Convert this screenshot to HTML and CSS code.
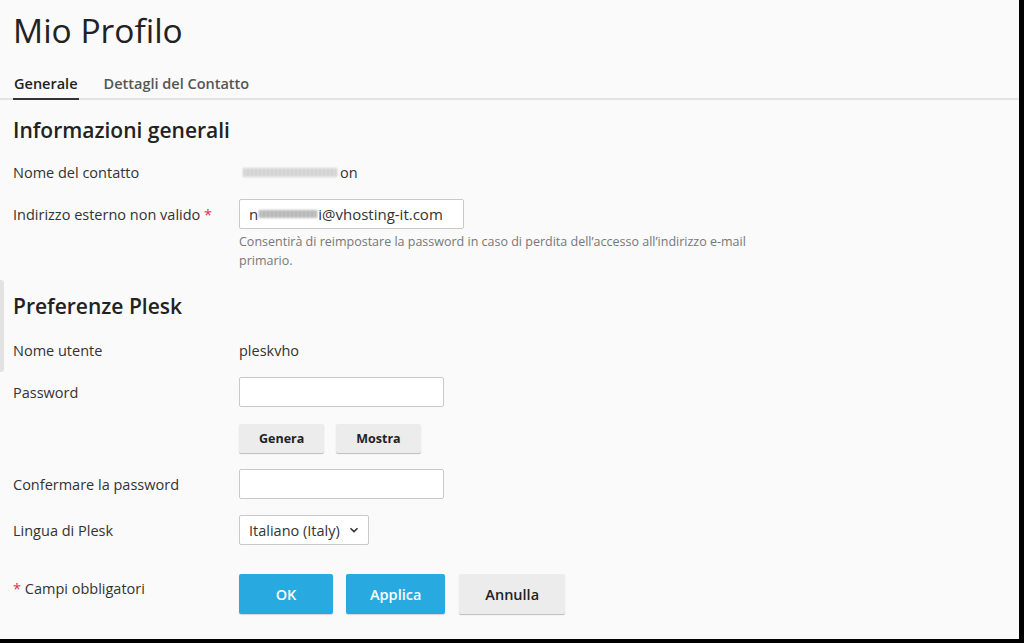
FILE: index.html
```html
<!DOCTYPE html>
<html lang="it">
<head>
  <meta charset="UTF-8" />
  <meta name="viewport" content="width=device-width, initial-scale=1.0"/>
  <title>Mio Profilo</title>
  <link rel="stylesheet" href="styles.css">
</head>
<body>
  <div class="page">
    <div class="side-handle"></div>

    <h1 class="page-title">Mio Profilo</h1>

    <ul class="tabs">
      <li class="tab active">Generale</li>
      <li class="tab">Dettagli del Contatto</li>
    </ul>

    <div class="form">
      <h2 class="section-title first">Informazioni generali</h2>

      <div class="row">
        <div class="label">Nome del contatto</div>
        <div class="value"><span class="blur blur-name"></span>on</div>
      </div>

      <div class="row">
        <div class="label">Indirizzo esterno non valido <span class="req">*</span></div>
        <div class="field">
          <div class="input input-wide">n<span class="blur blur-mail"></span>i@vhosting-it.com</div>
        </div>
      </div>
      <div class="hint">Consentirà di reimpostare la password in caso di perdita dell’accesso all’indirizzo e-mail primario.</div>

      <h2 class="section-title">Preferenze Plesk</h2>

      <div class="row">
        <div class="label">Nome utente</div>
        <div class="value">pleskvho</div>
      </div>

      <div class="row">
        <div class="label">Password</div>
        <div class="field"><input class="input" type="password"></div>
      </div>

      <div class="row spaced">
        <div class="label"></div>
        <div class="field btn-group">
          <button class="btn small">Genera</button>
          <button class="btn small">Mostra</button>
        </div>
      </div>

      <div class="row spaced">
        <div class="label">Confermare la password</div>
        <div class="field"><input class="input" type="password"></div>
      </div>

      <div class="row spaced">
        <div class="label">Lingua di Plesk</div>
        <div class="field">
          <div class="select">
            <select>
              <option>Italiano (Italy)</option>
            </select>
            <svg class="chevron" width="10" height="6" viewBox="0 0 10 6"><path d="M1.5 1.2 5 4.6 8.5 1.2" fill="none" stroke="#333" stroke-width="1.5"/></svg>
          </div>
        </div>
      </div>

      <div class="row footer">
        <div class="label"><span class="req">*</span> Campi obbligatori</div>
        <div class="field btn-group wide">
          <button class="btn primary">OK</button>
          <button class="btn primary">Applica</button>
          <button class="btn cancel">Annulla</button>
        </div>
      </div>
    </div>
  </div>
</body>
</html>
```

FILE: styles.css
```css
body {
  margin: 0;
  background: #000;
  font-family: "Open Sans", "Noto Sans", sans-serif;
  color: #333;
}
.page {
  position: relative;
  width: 1019px;
  height: 639px;
  background: #fafafa;
  overflow: hidden;
}
.side-handle {
  position: absolute;
  left: 0;
  top: 280px;
  width: 4px;
  height: 92px;
  background: #e2e2e2;
  border-radius: 0 3px 3px 0;
}
.page-title {
  margin: 10px 0 0 13px;
  font-size: 33.5px;
  line-height: 40px;
  font-weight: 400;
  color: #222;
}
.tabs {
  list-style: none;
  margin: 24px 0 0;
  padding: 0 0 0 13px;
  display: flex;
  gap: 24px;
  border-bottom: 2px solid #e3e3e3;
}
.tab {
  font-size: 14.5px;
  line-height: 20px;
  font-weight: 600;
  color: #555;
  padding: 0 1px 4px;
  margin-bottom: -2px;
  border-bottom: 2px solid transparent;
}
.tab.active {
  color: #222;
  border-bottom-color: #333;
}
.form {
  padding-left: 13px;
}
.section-title {
  margin: 22px 0 15px;
  font-size: 21px;
  line-height: 28px;
  font-weight: 600;
  color: #222;
}
.section-title.first {
  margin: 16px 0 13px;
}
.row {
  display: flex;
  align-items: center;
  min-height: 30px;
  margin-top: 12px;
  font-size: 14.5px;
}
.section-title + .row {
  margin-top: 0;
}
.row.spaced {
  margin-top: 16px;
}
.label {
  width: 226px;
  flex-shrink: 0;
  color: #333;
}
.value {
  color: #333;
  display: flex;
  align-items: center;
}
.req {
  color: #d7304a;
}
.blur {
  display: inline-block;
  height: 9px;
  filter: blur(1.2px);
  background: repeating-linear-gradient(90deg, #bdbdbd 0 2px, #dcdcdc 2px 4px);
}
.blur-name {
  width: 94px;
  margin: 0 3px 0 4px;
  opacity: 0.8;
}
.blur-mail {
  width: 58px;
  margin: 0 1px;
  height: 8px;
  background: repeating-linear-gradient(90deg, #a9a9a9 0 2px, #cfcfcf 2px 4px);
}
.input {
  box-sizing: border-box;
  width: 205px;
  height: 30px;
  background: #fff;
  border: 1px solid #c9c9c9;
  border-radius: 2px;
  font-family: inherit;
  font-size: 15px;
  color: #333;
  padding: 0 9px;
  margin: 0;
}
.input-wide {
  width: 225px;
  display: flex;
  align-items: center;
}
.hint {
  margin: 3px 0 0 226px;
  max-width: 530px;
  font-size: 12.5px;
  line-height: 19px;
  color: #777;
}
.btn-group {
  display: flex;
  gap: 12px;
}
.btn-group.wide {
  gap: 13px;
}
.btn {
  box-sizing: border-box;
  min-width: 94px;
  height: 40px;
  padding: 0 24px;
  border: none;
  border-radius: 2px;
  background: #ececec;
  box-shadow: 0 1px 1px rgba(0, 0, 0, 0.25);
  font-family: inherit;
  font-size: 14.5px;
  font-weight: 600;
  color: #222;
  cursor: pointer;
}
.btn.small {
  min-width: 0;
  height: 29px;
  padding: 0 20px;
  font-size: 12.5px;
  font-weight: 700;
}
.btn.primary {
  background: #28a9e0;
  color: #fff;
  box-shadow: 0 1px 1px rgba(0, 0, 0, 0.15);
}
.btn.cancel {
  padding: 0 26px;
  margin-left: 1px;
}
.row.footer {
  align-items: flex-start;
  margin-top: 29px;
}
.row.footer .label {
  padding-top: 5px;
  line-height: 20px;
}
.select {
  position: relative;
  width: 130px;
}
.select select {
  appearance: none;
  -webkit-appearance: none;
  box-sizing: border-box;
  width: 130px;
  height: 30px;
  padding: 0 0 0 9px;
  background: #fff;
  border: 1px solid #c9c9c9;
  border-radius: 2px;
  font-family: inherit;
  font-size: 14.5px;
  color: #333;
}
.chevron {
  position: absolute;
  right: 10px;
  top: 12px;
  pointer-events: none;
}
```
